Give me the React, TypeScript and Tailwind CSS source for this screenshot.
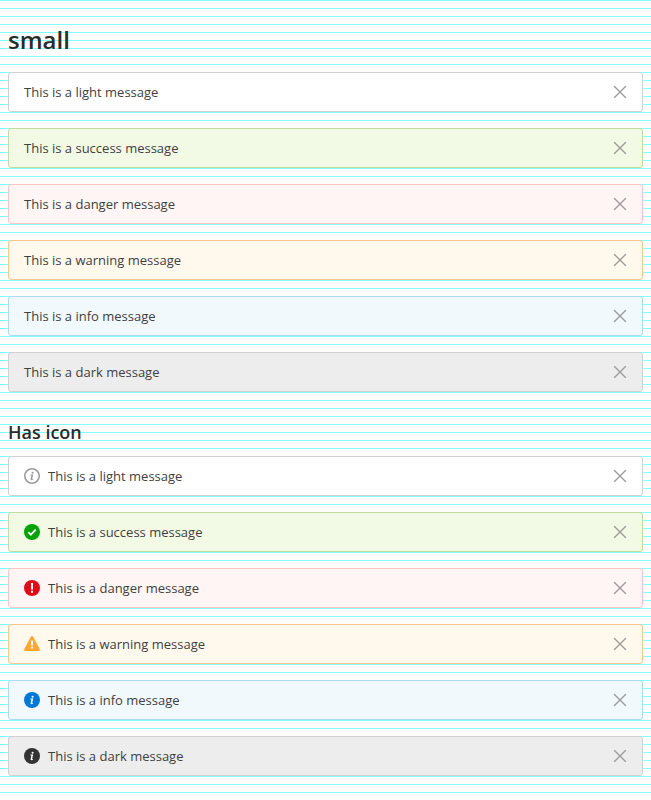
import { useState } from "react";

type Tone = "light" | "success" | "danger" | "warning" | "info" | "dark";

const tones: Tone[] = ["light", "success", "danger", "warning", "info", "dark"];

const boxStyles: Record<Tone, string> = {
  light: "bg-white border-[#d1d1d1]",
  success: "bg-[#f2fae5] border-[#c1dba0]",
  danger: "bg-[#fff5f4] border-[#fcc6c5]",
  warning: "bg-[#fff9ed] border-[#f6c98b]",
  info: "bg-[#f1f9fd] border-[#aadcf4]",
  dark: "bg-[#ededed] border-[#d1d1d1]",
};

function InfoGlyph() {
  return (
    <>
      <circle cx="8.6" cy="4.7" r="1.05" />
      <path d="M6.5 6.6h2.7L8.2 10.7c-.1.5.3.5 1 .1l-.2.8c-1.2.9-2.7.7-2.4-.6L7.4 7.5H6.3z" />
    </>
  );
}

function ToneIcon({ tone }: { tone: Tone }) {
  return (
    <svg viewBox="0 0 16 16" className="mr-2 size-4 shrink-0" aria-hidden="true">
      {tone === "light" && (
        <g fill="#999999">
          <circle cx="8" cy="8" r="7.25" fill="none" stroke="#999999" strokeWidth="1.5" />
          <InfoGlyph />
        </g>
      )}
      {tone === "success" && (
        <>
          <circle cx="8" cy="8" r="8" fill="#00a300" />
          <path d="M4.3 8.200l2.500 2.500 4.900-5" fill="none" stroke="white" strokeWidth="1.8" />
        </>
      )}
      {tone === "danger" && (
        <>
          <circle cx="8" cy="8" r="8" fill="#e00b17" />
          <path d="M7 3h2v6.500H7zM7 10.800h2v2H7z" fill="white" />
        </>
      )}
      {tone === "warning" && (
        <>
          <path d="M6.7.9Q8-.8 9.300.9L15.800 13.200Q16.300 15 14.500 15H1.500Q-.3 15 .2 13.200z" fill="#ffa733" />
          <path d="M7 4.500h2v5H7zM7 10.800h2v1.800H7z" fill="white" />
        </>
      )}
      {tone === "info" && (
        <>
          <circle cx="8" cy="8" r="8" fill="#0078d6" />
          <g fill="white"><InfoGlyph /></g>
        </>
      )}
      {tone === "dark" && (
        <>
          <circle cx="8" cy="8" r="8" fill="#333333" />
          <g fill="white"><InfoGlyph /></g>
        </>
      )}
    </svg>
  );
}

function Message({ tone, icon = false }: { tone: Tone; icon?: boolean }) {
  const [open, setOpen] = useState(true);
  if (!open) return null;
  return (
    <div className={`flex h-10 items-center rounded-[3px] border pr-[14px] pl-[15px] ${boxStyles[tone]}`}>
      {icon && <ToneIcon tone={tone} />}
      <p className="grow text-[13px] leading-6 text-[#3f3f3f]">This is a {tone} message</p>
      <button type="button" aria-label="Close" className="flex size-4 cursor-pointer items-center justify-center" onClick={() => setOpen(false)}>
        <svg viewBox="0 0 16 16" className="size-4" fill="none" stroke="#999999" strokeWidth="1.3" aria-hidden="true">
          <path d="M2.2 2.200l11.600 11.600M13.800 2.200L2.200 13.800" />
        </svg>
      </button>
    </div>
  );
}

function MessageList({ icon = false }: { icon?: boolean }) {
  return (
    <div className="flex flex-col gap-4">
      {tones.map((tone) => (
        <Message key={tone} tone={tone} icon={icon} />
      ))}
    </div>
  );
}

export default function App() {
  return (
    <main className="min-h-screen bg-white bg-[linear-gradient(to_bottom,#80ffff_1px,transparent_1px)] bg-[length:100%_8px] px-2 pt-6 pb-6 font-['Open_Sans',sans-serif] text-[#2b2b2b]">
      <h1 className="mb-4 text-2xl leading-8 font-semibold">small</h1>
      <MessageList />
      <h2 className="mt-7 mb-3 text-lg leading-6 font-semibold">Has icon</h2>
      <MessageList icon />
    </main>
  );
}
